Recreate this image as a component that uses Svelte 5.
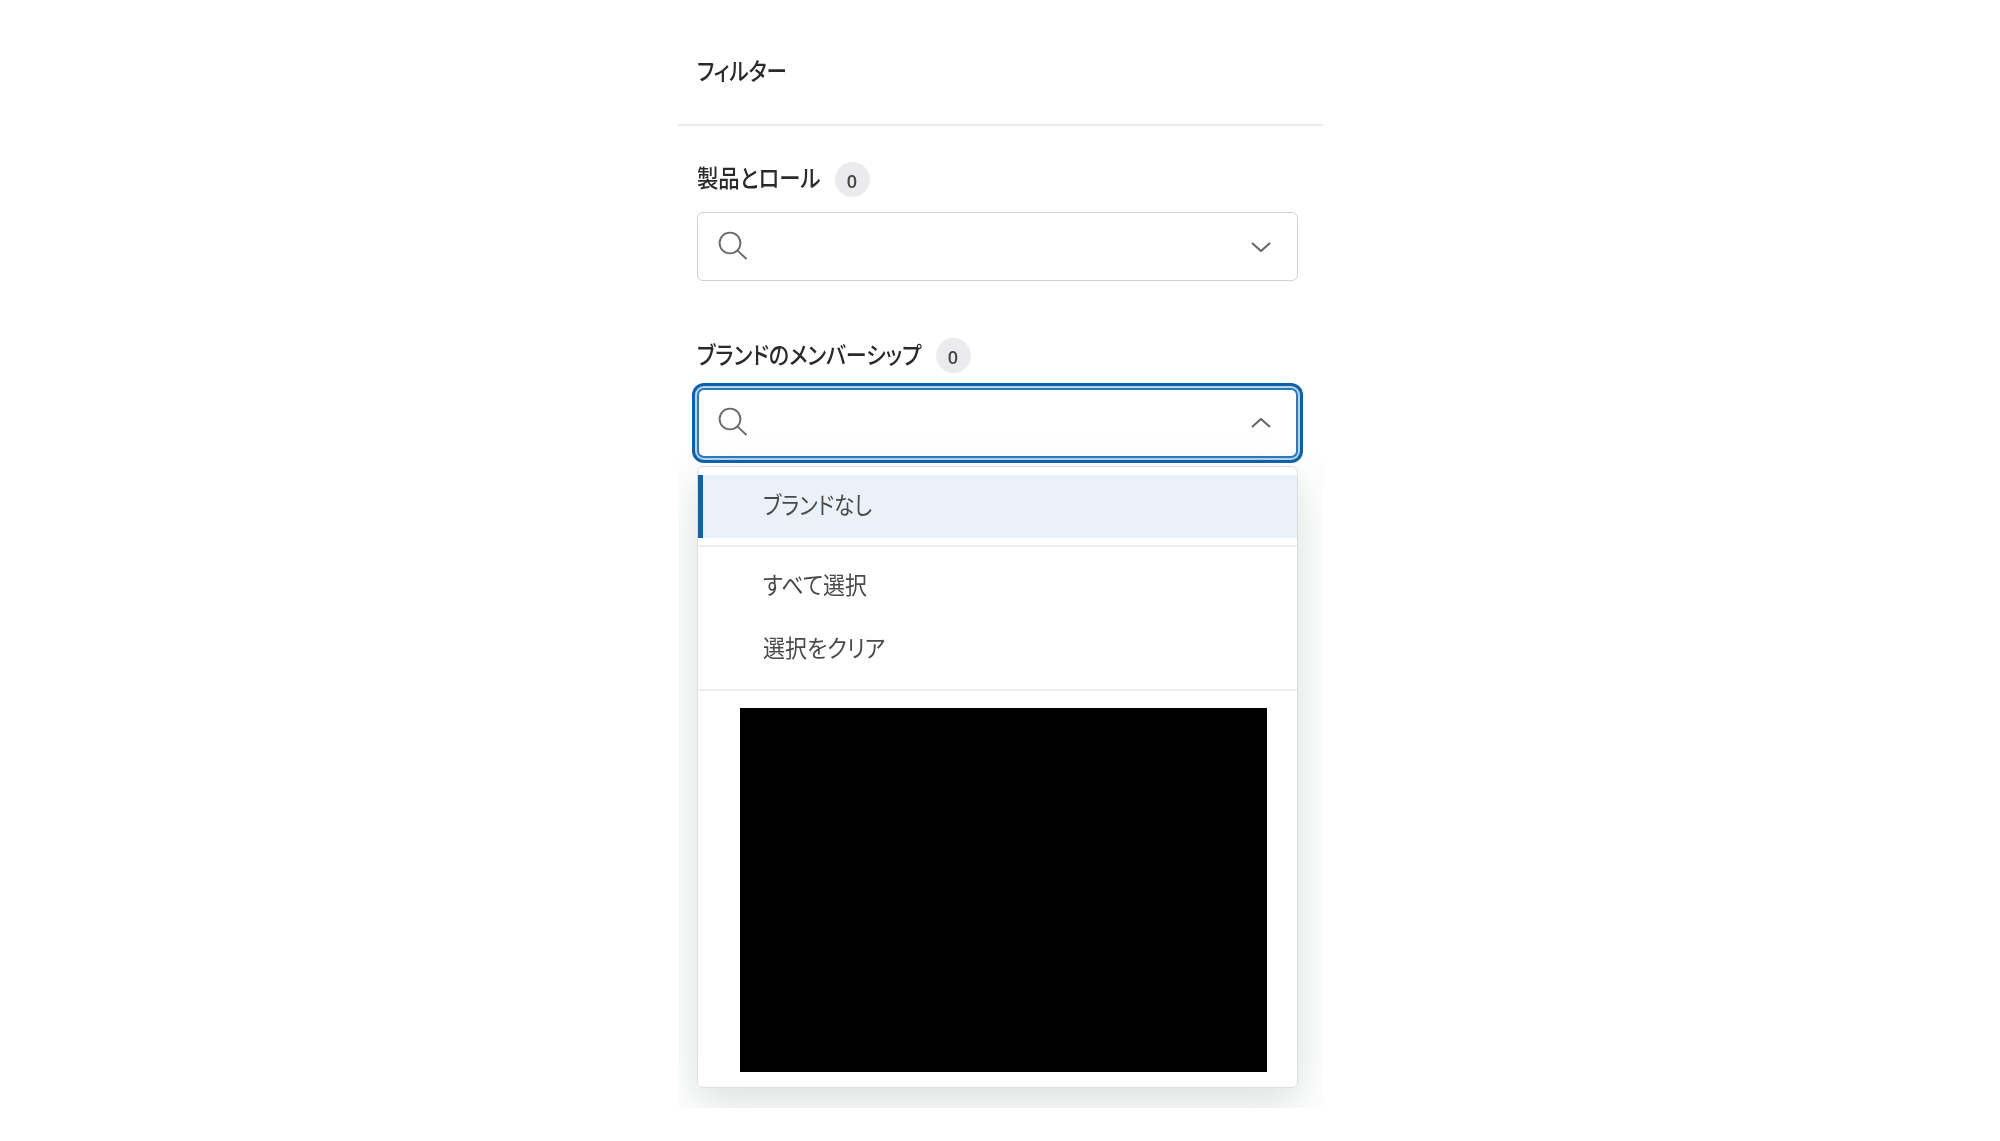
<script>
  const actions = ['すべて選択', '選択をクリア']
</script>

<div class="panel">
  <header class="head">
    <h2 class="title">フィルター</h2>
  </header>

  <section class="filter">
    <div class="labelRow">
      <span class="label kanji">製品とロール</span>
      <span class="badge">0</span>
    </div>
    <div class="combo">
      <svg class="search" viewBox="0 0 30 30" width="30" height="30">
        <circle cx="12" cy="12" r="10.4" />
        <path d="M19.6 19.6 L28.5 28" />
      </svg>
      <svg class="chevron" viewBox="0 0 20 10" width="20" height="10">
        <path d="M1 1 L10 9 L19 1" />
      </svg>
    </div>
  </section>

  <section class="filter">
    <div class="labelRow">
      <span class="label kana">ブランドのメンバーシップ</span>
      <span class="badge">0</span>
    </div>
    <div class="combo open">
      <svg class="search" viewBox="0 0 30 30" width="30" height="30">
        <circle cx="12" cy="12" r="10.4" />
        <path d="M19.6 19.6 L28.5 28" />
      </svg>
      <svg class="chevron" viewBox="0 0 20 10" width="20" height="10">
        <path d="M1 9 L10 1 L19 9" />
      </svg>
    </div>

    <div class="menu">
      <div class="option selected"><span class="optText narrow">ブランドなし</span></div>
      <hr />
      <div class="actions">
        {#each actions as a}
          <div class="option"><span class="optText">{a}</span></div>
        {/each}
      </div>
      <hr />
      <div class="redacted"></div>
    </div>
  </section>
</div>

<style>
  :global(body) {
    background: #fff;
    font-family: "Noto Sans CJK JP", "Noto Sans", sans-serif;
  }

  .panel {
    width: 645px;
    height: 1108px;
    margin: 0 auto;
    overflow: hidden;
    filter: blur(0.5px);
  }

  .head {
    height: 124px;
    padding-left: 19px;
    display: flex;
    align-items: center;
    border-bottom: 2px solid #ececec;
    box-sizing: content-box;
  }

  .title {
    margin: 15px 0 0;
    width: 90px;
    font-size: 24px;
    font-weight: 500;
    color: #2a2a2a;
    white-space: nowrap;
    font-feature-settings: "palt";
    transform: scaleX(0.855);
    transform-origin: left center;
  }

  .filter {
    margin: 35px 25px 0 19px;
  }

  .filter + .filter {
    margin-top: 56px;
  }

  .labelRow {
    display: flex;
    align-items: center;
    height: 36px;
    margin-bottom: 15px;
  }

  .label {
    font-size: 24px;
    font-weight: 500;
    color: #2a2a2a;
    white-space: nowrap;
    font-feature-settings: "palt";
    transform-origin: left center;
    margin-bottom: 6px;
  }

  .kanji {
    width: 138px;
    transform: scaleX(0.89);
  }

  .kana {
    width: 239px;
    transform: scaleX(0.875);
    margin-bottom: 4px;
  }

  .badge {
    width: 35px;
    height: 35px;
    border-radius: 50%;
    background: #ebebed;
    color: #444;
    font-family: "Open Sans", sans-serif;
    font-size: 18px;
    font-weight: 600;
    display: flex;
    align-items: center;
    justify-content: center;
    padding-top: 3px;
    box-sizing: border-box;
  }

  .combo {
    height: 69px;
    box-sizing: border-box;
    border: 1.5px solid #d0d0d0;
    border-radius: 6px;
    display: flex;
    align-items: center;
    justify-content: space-between;
    padding: 0 26px 0 20px;
    background: #fff;
  }

  .combo.open {
    height: 70px;
    border: 2px solid #2a7bbd;
    box-shadow: 0 0 0 2px #b4d4ec, 0 0 0 5px #0f62a8;
    border-radius: 7px;
    padding: 0 25px 0 19px;
  }

  .search {
    fill: none;
    stroke: #6a6a6a;
    stroke-width: 1.9;
    margin-top: -2px;
  }

  .chevron {
    fill: none;
    stroke: #666;
    stroke-width: 2.1;
  }

  .menu {
    margin-top: 8px;
    border: 1px solid #dcdfe0;
    border-radius: 6px;
    padding: 8px 0 15px;
    background: #fff;
    box-shadow: 0 14px 44px rgba(70, 95, 90, 0.2);
  }

  hr {
    border: 0;
    border-top: 2px solid #eeeeee;
    margin: 0;
  }

  .option {
    height: 63px;
    display: flex;
    align-items: center;
    padding-left: 65px;
    box-sizing: border-box;
    font-size: 24px;
    color: #4a4a4a;
  }

  .optText {
    white-space: nowrap;
    font-feature-settings: "palt";
    transform: scaleX(0.915);
    transform-origin: left center;
    margin-bottom: 6px;
  }

  .optText.narrow {
    transform: scaleX(0.865);
  }

  .selected {
    background: #eaf1f8;
    border-left: 5px solid #0f62a8;
    padding-left: 60px;
    margin-bottom: 7px;
  }

  .actions {
    padding: 8px 0 10px;
  }

  .actions .option {
    height: 62px;
  }

  .actions .option:last-child .optText {
    margin-bottom: 4px;
  }

  .redacted {
    width: 527px;
    height: 364px;
    margin: 17px 0 0 42px;
    background: #000;
  }
</style>
